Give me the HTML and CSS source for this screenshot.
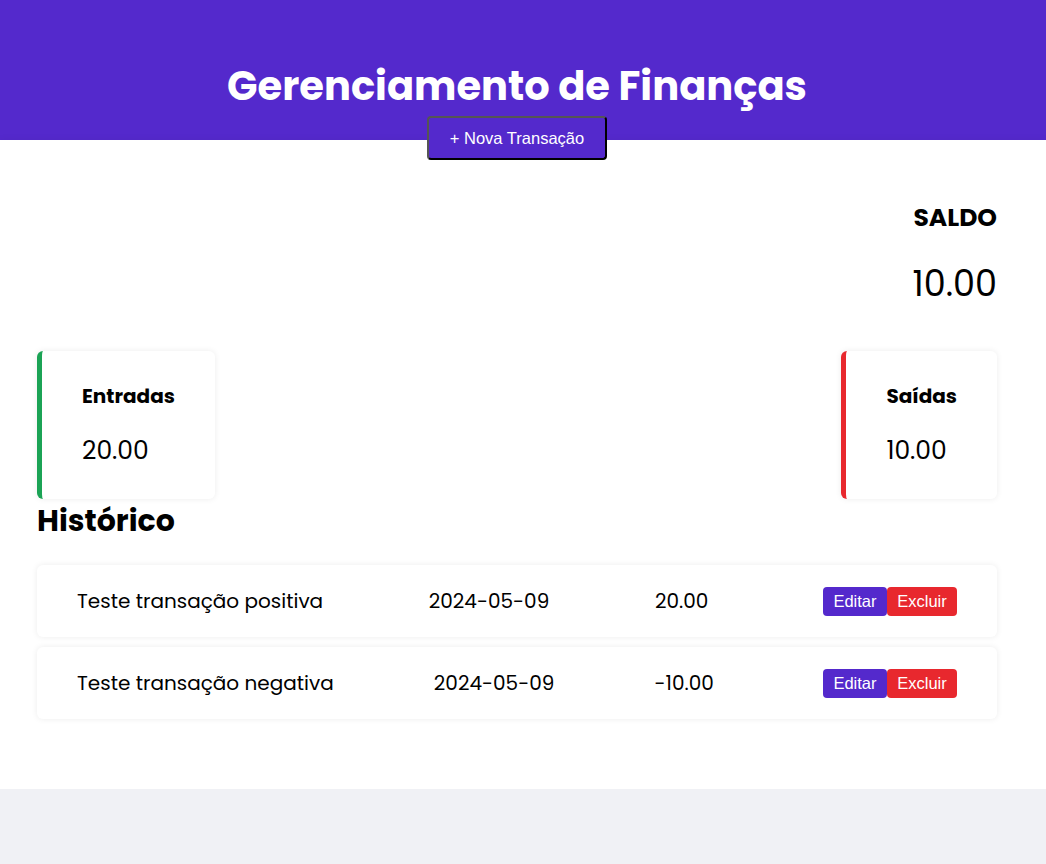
FILE: index.html
```html
<!DOCTYPE html>
<html lang="pt-BR">
<head>
<meta charset="utf-8">
<title>Gerenciamento de Finanças</title>
<link rel="stylesheet" href="styles.css">
</head>
<body>
<header class="header">
  <h1 class="title">Gerenciamento de Finanças</h1>
  <button class="btn-new">+ Nova Transação</button>
</header>
<main class="main">
  <div class="container">
    <section class="balance">
      <h3 class="balance-label">SALDO</h3>
      <p class="balance-value">10.00</p>
    </section>
    <section class="cards">
      <div class="card card-in">
        <h4 class="card-title">Entradas</h4>
        <p class="card-value">20.00</p>
      </div>
      <div class="card card-out">
        <h4 class="card-title">Saídas</h4>
        <p class="card-value">10.00</p>
      </div>
    </section>
    <h2 class="history-title">Histórico</h2>
    <ul class="list">
      <li class="row">
        <span class="cell">Teste transação positiva</span>
        <span class="cell">2024-05-09</span>
        <span class="cell">20.00</span>
        <span class="actions"><button class="btn btn-edit">Editar</button><button class="btn btn-del">Excluir</button></span>
      </li>
      <li class="row">
        <span class="cell">Teste transação negativa</span>
        <span class="cell">2024-05-09</span>
        <span class="cell">-10.00</span>
        <span class="actions"><button class="btn btn-edit">Editar</button><button class="btn btn-del">Excluir</button></span>
      </li>
    </ul>
  </div>
</main>
</body>
</html>
```
FILE: styles.css
```css
* { box-sizing: border-box; }
body {
  margin: 0;
  background: #f0f1f5;
  font-family: "Poppins", "Open Sans", "Noto Sans", sans-serif;
  color: #000;
}
.header {
  height: 140px;
  padding-right: 12px;
  background: #5429cc;
  display: flex;
  flex-direction: column;
  align-items: center;
  justify-content: flex-end;
}
.title {
  margin: 0 0 6px;
  color: #fff;
  font-size: 40px;
  font-weight: 700;
  line-height: 48px;
}
.btn-new {
  margin-bottom: -20px;
  width: 180px;
  height: 44px;
  background: #5429cc;
  color: #fff;
  font-family: "Liberation Sans", Arial, sans-serif;
  font-size: 16.5px;
  border: 2px solid;
  border-color: #555 #000 #000 #555;
  border-radius: 4px;
  position: relative;
}
.main {
  background: #fff;
  padding: 50px 12px 70px 0;
  box-shadow: 0 3px 10px rgba(0,0,0,0.1);
}
.container {
  width: 960px;
  margin: 0 auto;
}
.balance {
  text-align: right;
}
.balance-label {
  margin: 0;
  padding-top: 8px;
  font-size: 25px;
  font-weight: 700;
  line-height: 40px;
}
.balance-value {
  margin: 21px 0 0;
  font-size: 35px;
  line-height: 50px;
}
.cards {
  display: flex;
  justify-content: space-between;
  margin-top: 42px;
}
.card {
  height: 148px;
  padding: 30px 40px;
  border-radius: 6px;
  background: #fff;
  box-shadow: 0 0 6px rgba(0,0,0,0.08);
}
.card-in { border-left: 5px solid #1ba355; }
.card-out { border-left: 5px solid #e8282e; }
.card-title {
  margin: 0;
  font-size: 20px;
  font-weight: 700;
  line-height: 30px;
}
.card-value {
  margin: 25px 0 0;
  font-size: 25px;
  line-height: 30px;
}
.history-title {
  margin: 0;
  font-size: 30px;
  font-weight: 700;
  line-height: 44px;
}
.list {
  list-style: none;
  margin: 22px 0 0;
  padding: 0;
  display: flex;
  flex-direction: column;
  gap: 10px;
}
.row {
  height: 72px;
  padding: 0 40px;
  display: flex;
  align-items: center;
  justify-content: space-between;
  background: #fff;
  border-radius: 6px;
  box-shadow: 0 0 6px rgba(0,0,0,0.08);
  font-size: 20px;
}
.actions { display: flex; margin-left: 9px; }
.btn {
  height: 29px;
  border: none;
  border-radius: 4px;
  color: #fff;
  font-family: "Liberation Sans", Arial, sans-serif;
  font-size: 16.5px;
  padding: 0;
}
.btn-edit { width: 64px; background: #5429cc; }
.btn-del { width: 70px; background: #e8282e; }
```
